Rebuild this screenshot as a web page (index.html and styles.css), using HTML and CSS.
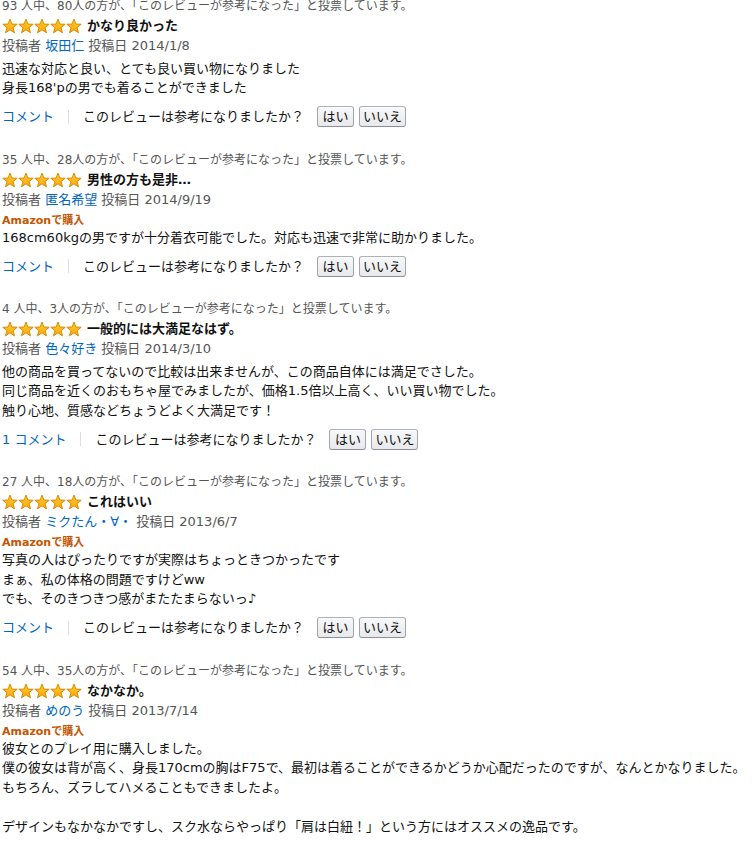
FILE: index.html
```html
<!DOCTYPE html>
<html lang="ja">
<head>
<meta charset="utf-8">
<title>カスタマーレビュー</title>
<link rel="stylesheet" href="styles.css">
</head>
<body>
<svg class="defs" aria-hidden="true">
  <defs>
    <linearGradient id="starFill" x1="0" y1="0" x2="0" y2="1">
      <stop offset="0" stop-color="#ffd040"/>
      <stop offset="1" stop-color="#ffa600"/>
    </linearGradient>
    <symbol id="star" viewBox="0 0 16 16">
      <path d="M8 1.1 L9.85 6.05 L15.2 6.25 L11 9.6 L12.5 14.8 L8 11.8 L3.5 14.8 L5 9.6 L0.8 6.25 L6.15 6.05 Z" fill="url(#starFill)" stroke="#d98a00" stroke-width="1" stroke-linejoin="round"/>
    </symbol>
  </defs>
</svg>

<div class="reviews">

  <div class="review">
    <div class="helpful">93 人中、80人の方が、「このレビューが参考になった」と投票しています。</div>
    <div class="title-row">
      <svg class="stars" width="80" height="16" viewBox="0 0 80 16"><use href="#star" x="0" width="16" height="16"/><use href="#star" x="16" width="16" height="16"/><use href="#star" x="32" width="16" height="16"/><use href="#star" x="48" width="16" height="16"/><use href="#star" x="64" width="16" height="16"/></svg>
      <span class="title">かなり良かった</span>
    </div>
    <div class="author">投稿者 <a class="link">坂田仁</a> 投稿日 2014/1/8</div>
    <div class="body">迅速な対応と良い、とても良い買い物になりました<br>身長168'pの男でも着ることができました</div>
    <div class="actions">
      <a class="link">コメント</a><span class="sep"></span><span class="question">このレビューは参考になりましたか？</span><button class="btn btn-yes">はい</button><button class="btn btn-no">いいえ</button>
    </div>
  </div>

  <div class="review">
    <div class="helpful">35 人中、28人の方が、「このレビューが参考になった」と投票しています。</div>
    <div class="title-row">
      <svg class="stars" width="80" height="16" viewBox="0 0 80 16"><use href="#star" x="0" width="16" height="16"/><use href="#star" x="16" width="16" height="16"/><use href="#star" x="32" width="16" height="16"/><use href="#star" x="48" width="16" height="16"/><use href="#star" x="64" width="16" height="16"/></svg>
      <span class="title">男性の方も是非…</span>
    </div>
    <div class="author">投稿者 <a class="link">匿名希望</a> 投稿日 2014/9/19</div>
    <div class="purchase">Amazonで購入</div>
    <div class="body">168cm60kgの男ですが十分着衣可能でした。対応も迅速で非常に助かりました。</div>
    <div class="actions">
      <a class="link">コメント</a><span class="sep"></span><span class="question">このレビューは参考になりましたか？</span><button class="btn btn-yes">はい</button><button class="btn btn-no">いいえ</button>
    </div>
  </div>

  <div class="review">
    <div class="helpful">4 人中、3人の方が、「このレビューが参考になった」と投票しています。</div>
    <div class="title-row">
      <svg class="stars" width="80" height="16" viewBox="0 0 80 16"><use href="#star" x="0" width="16" height="16"/><use href="#star" x="16" width="16" height="16"/><use href="#star" x="32" width="16" height="16"/><use href="#star" x="48" width="16" height="16"/><use href="#star" x="64" width="16" height="16"/></svg>
      <span class="title">一般的には大満足なはず。</span>
    </div>
    <div class="author">投稿者 <a class="link">色々好き</a> 投稿日 2014/3/10</div>
    <div class="body">他の商品を買ってないので比較は出来ませんが、この商品自体には満足でさした。<br>同じ商品を近くのおもちゃ屋でみましたが、価格1.5倍以上高く、いい買い物でした。<br>触り心地、質感などちょうどよく大満足です！</div>
    <div class="actions">
      <a class="link">1 コメント</a><span class="sep"></span><span class="question">このレビューは参考になりましたか？</span><button class="btn btn-yes">はい</button><button class="btn btn-no">いいえ</button>
    </div>
  </div>

  <div class="review">
    <div class="helpful">27 人中、18人の方が、「このレビューが参考になった」と投票しています。</div>
    <div class="title-row">
      <svg class="stars" width="80" height="16" viewBox="0 0 80 16"><use href="#star" x="0" width="16" height="16"/><use href="#star" x="16" width="16" height="16"/><use href="#star" x="32" width="16" height="16"/><use href="#star" x="48" width="16" height="16"/><use href="#star" x="64" width="16" height="16"/></svg>
      <span class="title">これはいい</span>
    </div>
    <div class="author">投稿者 <a class="link">ミクたん・∀・</a> 投稿日 2013/6/7</div>
    <div class="purchase">Amazonで購入</div>
    <div class="body">写真の人はぴったりですが実際はちょっときつかったです<br>まぁ、私の体格の問題ですけどww<br>でも、そのきつきつ感がまたたまらないっ♪</div>
    <div class="actions">
      <a class="link">コメント</a><span class="sep"></span><span class="question">このレビューは参考になりましたか？</span><button class="btn btn-yes">はい</button><button class="btn btn-no">いいえ</button>
    </div>
  </div>

  <div class="review">
    <div class="helpful">54 人中、35人の方が、「このレビューが参考になった」と投票しています。</div>
    <div class="title-row">
      <svg class="stars" width="80" height="16" viewBox="0 0 80 16"><use href="#star" x="0" width="16" height="16"/><use href="#star" x="16" width="16" height="16"/><use href="#star" x="32" width="16" height="16"/><use href="#star" x="48" width="16" height="16"/><use href="#star" x="64" width="16" height="16"/></svg>
      <span class="title">なかなか。</span>
    </div>
    <div class="author">投稿者 <a class="link">めのう</a> 投稿日 2013/7/14</div>
    <div class="purchase">Amazonで購入</div>
    <div class="body">彼女とのプレイ用に購入しました。<br>僕の彼女は背が高く、身長170cmの胸はF75で、最初は着ることができるかどうか心配だったのですが、なんとかなりました。<br>もちろん、ズラしてハメることもできましたよ。<br><br>デザインもなかなかですし、スク水ならやっぱり「肩は白紐！」という方にはオススメの逸品です。</div>
  </div>

</div>
</body>
</html>
```

FILE: styles.css
```css
html, body {
  margin: 0;
  padding: 0;
  background: #fff;
}

body {
  font-family: "DejaVu Sans", "Noto Sans CJK JP", sans-serif;
  font-size: 13px;
  color: #111;
  overflow: hidden;
}

.defs {
  display: block;
  width: 0;
  height: 0;
  overflow: hidden;
}

.reviews {
  margin-top: -3px;
  padding-left: 2px;
  width: 752px;
}

.review {
  margin-bottom: 23px;
}

.helpful {
  font-size: 12px;
  line-height: 19px;
  color: #555;
  white-space: nowrap;
}

.title-row {
  display: flex;
  align-items: center;
  height: 20px;
}

.stars {
  display: block;
  flex: none;
  margin-right: 5px;
}

.title {
  font-weight: bold;
  font-size: 13px;
  line-height: 20px;
  color: #111;
}

.author {
  line-height: 20px;
  color: #555;
  margin-bottom: 2.5px;
}

.link {
  color: #0066c0;
  text-decoration: none;
  cursor: pointer;
}

.purchase {
  margin-top: 4px;
  font-size: 11px;
  font-weight: bold;
  line-height: 14px;
  color: #c45500;
}

.body {
  line-height: 19.5px;
  color: #111;
  white-space: nowrap;
}

.actions {
  display: flex;
  align-items: center;
  height: 22px;
  margin-top: 8px;
  line-height: 19px;
}

.sep {
  display: block;
  width: 1px;
  height: 14px;
  background: #ddd;
  margin: 0 14px;
}

.question {
  color: #111;
  margin-right: 13px;
}

.btn {
  box-sizing: border-box;
  height: 21px;
  padding: 0;
  margin: 0 5px 0 0;
  font-family: "DejaVu Sans", "Noto Sans CJK JP", sans-serif;
  font-size: 13px;
  line-height: 19px;
  color: #111;
  background: linear-gradient(to bottom, #f7f8fa, #e7e9ec);
  border: 1px solid #adb1b8;
  border-color: #adb1b8 #a2a6ac #8d9096;
  border-radius: 3px;
  box-shadow: inset 0 1px 0 rgba(255, 255, 255, 0.6);
  cursor: pointer;
}

.btn-yes {
  width: 37px;
}

.btn-no {
  width: 47px;
}
```
